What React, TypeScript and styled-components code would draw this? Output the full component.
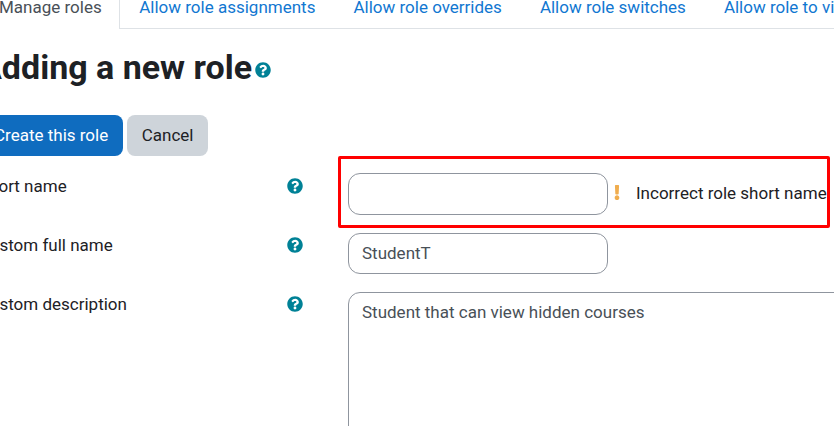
import { createGlobalStyle } from 'styled-components';
import styled from 'styled-components';
import { FaExclamation, FaQuestionCircle } from 'react-icons/fa';

const tabs = [
  { text: 'Manage roles', active: true },
  { text: 'Allow role assignments' },
  { text: 'Allow role overrides' },
  { text: 'Allow role switches' },
  { text: 'Allow role to view' },
];

const GlobalStyle = createGlobalStyle`
  html, body {
    margin: 0;
    padding: 0;
    background: white;
    overflow: hidden;
  }
`;

const Page = styled.div`
  position: relative;
  width: 834px;
  height: 426px;
  overflow: hidden;
  font-family: Roboto, "Liberation Sans", sans-serif;
  font-size: 17px;
  color: #1d2125;
`;

const Content = styled.div`
  width: 1100px;
  margin-left: -21px;
`;

const TabBar = styled.nav`
  display: flex;
  height: 28px;
  border-bottom: 1px solid #dee2e6;
`;

const Tab = styled.a<{ $active?: boolean }>`
  display: block;
  height: ${(p) => (p.$active ? '29px' : '28px')};
  line-height: 15px;
  padding: ${(p) => (p.$active ? '0 17px 0 20px' : '0 18px 0 19px')};
  margin-right: ${(p) => (p.$active ? '0.5px' : '0')};
  box-sizing: border-box;
  white-space: nowrap;
  color: ${(p) => (p.$active ? '#495057' : '#1177d1')};
  background: ${(p) => (p.$active ? 'white' : 'transparent')};
  border-right: 1px solid ${(p) => (p.$active ? '#dee2e6' : 'transparent')};
`;

const Title = styled.h1`
  display: flex;
  align-items: center;
  margin: 18px 0 0;
  height: 40px;
  font-size: 34px;
  line-height: 40px;
  font-weight: 700;
`;

const TitleHelp = styled(FaQuestionCircle)`
  width: 16px;
  height: 16px;
  margin: 5px 0 0 3px;
  color: #008196;
`;

const Actions = styled.div`
  display: flex;
  gap: 4px;
  margin: 28px 0 17px;
`;

const Button = styled.button<{ $primary?: boolean }>`
  height: 41px;
  padding: 0 14.5px 1px 15px;
  border: 0;
  border-radius: 8px;
  font: inherit;
  color: ${(p) => (p.$primary ? 'white' : '#1d2125')};
  background: ${(p) => (p.$primary ? '#0f6cbf' : '#ced4da')};
`;

const Row = styled.div<{ $tight?: boolean }>`
  display: grid;
  grid-template-columns: 324px 1fr;
  margin-bottom: ${(p) => (p.$tight ? '17.9px' : '18px')};
`;

const LabelCell = styled.div`
  display: flex;
  justify-content: space-between;
  align-items: center;
  height: 28px;
  margin-top: -1.5px;
`;

const Help = styled(FaQuestionCircle)`
  width: 16px;
  height: 16px;
  color: #008196;
`;

const Field = styled.div`
  display: flex;
  align-items: center;
  margin-left: 45px;
`;

const Input = styled.input`
  width: 260px;
  height: 41.5px;
  padding: 0 13px;
  box-sizing: border-box;
  border: 1px solid #8f959e;
  border-radius: 12px;
  font: inherit;
  color: #495057;
  outline: none;
`;

const Description = styled.textarea`
  width: 700px;
  height: 200px;
  padding: 7px 13px;
  box-sizing: border-box;
  border: 1px solid #8f959e;
  border-radius: 12px;
  font: inherit;
  line-height: 24px;
  color: #495057;
  outline: none;
  resize: none;
`;

const Warning = styled(FaExclamation)`
  width: 8px;
  height: 15px;
  margin: 0 0 3px 5px;
  color: #f0ad4e;
`;

const Message = styled.span`
  margin: 0 0 2px 15px;
  white-space: nowrap;
`;

const Highlight = styled.div`
  position: absolute;
  left: 338px;
  top: 156px;
  width: 492px;
  height: 72px;
  box-sizing: border-box;
  border: 3px solid #ff0000;
  border-radius: 2px;
  pointer-events: none;
`;

export default function App() {
  return (
    <Page>
      <GlobalStyle />
      <Content>
        <TabBar>
          {tabs.map((tab) => (
            <Tab key={tab.text} $active={tab.active}>
              {tab.text}
            </Tab>
          ))}
        </TabBar>
        <Title>
          Adding a new role
          <TitleHelp />
        </Title>
        <Actions>
          <Button $primary>Create this role</Button>
          <Button>Cancel</Button>
        </Actions>
        <Row>
          <LabelCell>
            Short name
            <Help />
          </LabelCell>
          <Field>
            <Input readOnly value="" />
            <Warning />
            <Message>Incorrect role short name</Message>
          </Field>
        </Row>
        <Row $tight>
          <LabelCell>
            Custom full name
            <Help />
          </LabelCell>
          <Field>
            <Input readOnly value="StudentT" />
          </Field>
        </Row>
        <Row>
          <LabelCell>
            Custom description
            <Help />
          </LabelCell>
          <Field>
            <Description readOnly value="Student that can view hidden courses" />
          </Field>
        </Row>
      </Content>
      <Highlight />
    </Page>
  );
}
